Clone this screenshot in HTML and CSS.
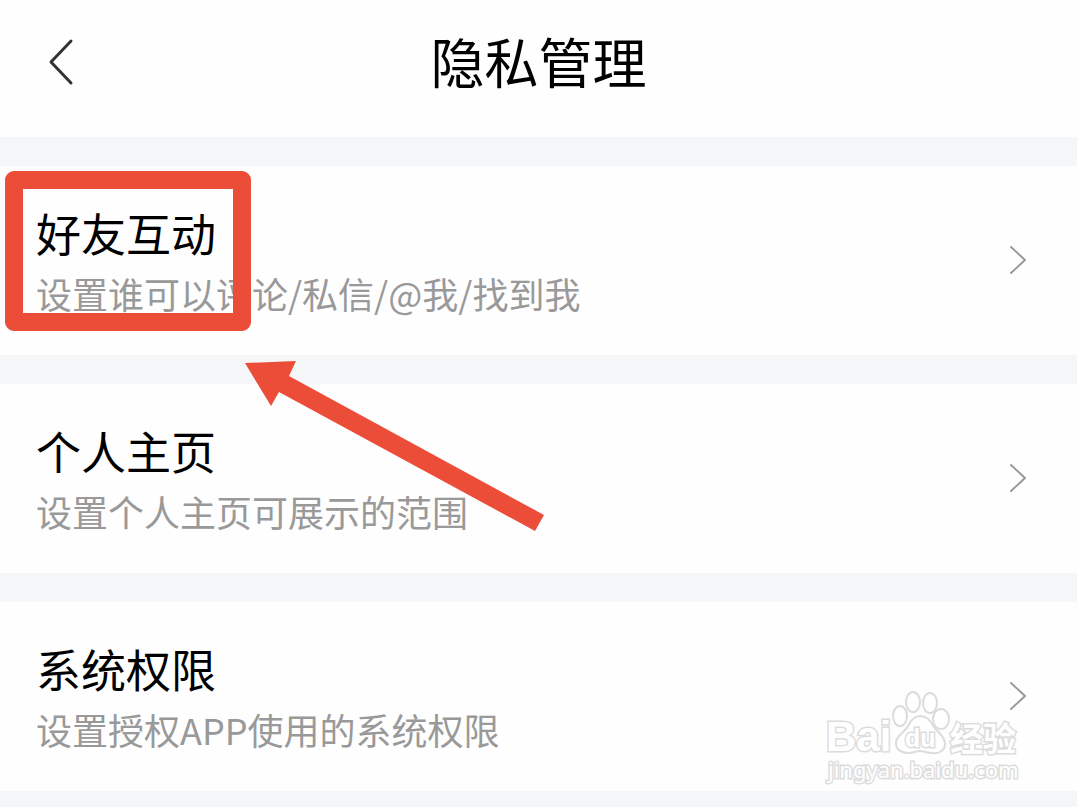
FILE: index.html
```html
<!DOCTYPE html>
<html lang="zh-CN">

<head>
    <meta charset="UTF-8">
    <meta name="viewport" content="width=device-width, initial-scale=1.0">
    <title>隐私管理</title>
    <link rel="stylesheet" href="styles.css">
</head>

<body>
    <header class="topo">
        <button class="voltar" type="button" aria-label="返回">
            <svg width="28" height="50" viewBox="0 0 28 50">
                <path d="M25 5L5 26L25 47" />
            </svg>
        </button>
        <h1>隐私管理</h1>
    </header>

    <main class="lista">
        <div class="destaque">
            <a class="item" href="#">
                <span class="texto">
                    <span class="nome">好友互动</span>
                    <span class="descricao">设置谁可以评论/私信/@我/找到我</span>
                </span>
                <svg class="seta" width="20" height="32" viewBox="0 0 20 32">
                    <path d="M2 3L16 16L2 29" />
                </svg>
            </a>
            <div class="moldura"></div>
            <svg class="flecha" width="300" height="172" viewBox="0 0 300 172">
                <path d="M0 2L51 0L44 15L299 154L290 170L34 31L26 45Z" />
            </svg>
        </div>

        <a class="item" href="#">
            <span class="texto">
                <span class="nome">个人主页</span>
                <span class="descricao">设置个人主页可展示的范围</span>
            </span>
            <svg class="seta" width="20" height="32" viewBox="0 0 20 32">
                <path d="M2 3L16 16L2 29" />
            </svg>
        </a>

        <div class="destaque">
            <a class="item" href="#">
                <span class="texto">
                    <span class="nome">系统权限</span>
                    <span class="descricao">设置授权APP使用的系统权限</span>
                </span>
                <svg class="seta" width="20" height="32" viewBox="0 0 20 32">
                    <path d="M2 3L16 16L2 29" />
                </svg>
            </a>
            <svg class="marca" width="200" height="96" viewBox="0 0 200 96">
                <ellipse cx="75" cy="25" rx="7" ry="10" />
                <ellipse cx="88" cy="11" rx="7" ry="10" />
                <ellipse cx="105" cy="12" rx="7" ry="10" />
                <ellipse cx="116" cy="28" rx="8" ry="10" />
                <path d="M95 25C102 25 106 30 109 36C113 42 120 45 120 53C120 60 113 63 107 62C102 62 99 60 95 60C91 60 88 62 83 62C76 62 70 58 71 51C72 44 80 41 83 35C86 29 89 25 95 25Z" />
                <text class="marca-bai" x="1" y="60">Bai</text>
                <text class="marca-du" x="80" y="56">du</text>
                <text class="marca-cn" x="125" y="60">经验</text>
                <text class="marca-url" x="3" y="87">jingyan.baidu.com</text>
            </svg>
        </div>
    </main>
</body>

</html>
```
FILE: styles.css
```css
* {
    box-sizing: border-box;
}

body {
    margin: 0;
    font-family: "Noto Sans CJK SC", sans-serif;
    background: #f5f6f8;
    color: #000;
    overflow-x: hidden;
}

.topo {
    display: grid;
    grid-template-columns: 60px 1fr 60px;
    align-items: center;
    padding: 21px 30px 36px;
    background: #fefefe;
}

h1 {
    margin: 0;
    font-size: 54px;
    font-weight: 400;
    line-height: 80px;
    text-align: center;
}

.voltar {
    display: flex;
    padding: 0 16px;
    border: none;
    background: none;
    cursor: pointer;
}

.voltar path {
    fill: none;
    stroke: #333;
    stroke-width: 3;
    stroke-linecap: round;
    stroke-linejoin: round;
}

.lista {
    display: flex;
    flex-direction: column;
    gap: 29px;
    padding: 29px 0 16px;
}

.destaque {
    position: relative;
}

.item {
    display: flex;
    align-items: center;
    justify-content: space-between;
    padding: 34px 48px 36px 36px;
    background: #fefefe;
    color: inherit;
    text-decoration: none;
}

.texto {
    display: flex;
    flex-direction: column;
    gap: 2px;
}

.nome {
    font-size: 45px;
    line-height: 65px;
}

.descricao {
    font-size: 36px;
    line-height: 52px;
    color: #999;
}

.seta path {
    fill: none;
    stroke: #999;
    stroke-width: 2;
    stroke-linecap: round;
    stroke-linejoin: round;
}

.moldura {
    position: absolute;
    top: 5px;
    left: 5px;
    width: 246px;
    height: 160px;
    border: 18px solid #ec4d38;
    border-radius: 9px;
    pointer-events: none;
}

.flecha {
    position: absolute;
    top: 195px;
    left: 245px;
    z-index: 1;
    fill: #ec4d38;
    pointer-events: none;
}

.marca {
    position: absolute;
    right: 52px;
    bottom: 4px;
    overflow: visible;
    fill: #fff;
    stroke: #dcdcdc;
    stroke-width: 2;
    pointer-events: none;
}

.marca text {
    paint-order: stroke;
    stroke-width: 3;
}

.marca-bai {
    font: bold 42px "Liberation Sans", sans-serif;
}

.marca-du {
    font: bold 25px "Liberation Sans", sans-serif;
}

.marca-cn {
    font: bold 33px "Noto Sans CJK SC", sans-serif;
}

.marca-url {
    font: 22px "Noto Sans", sans-serif;
}
```
